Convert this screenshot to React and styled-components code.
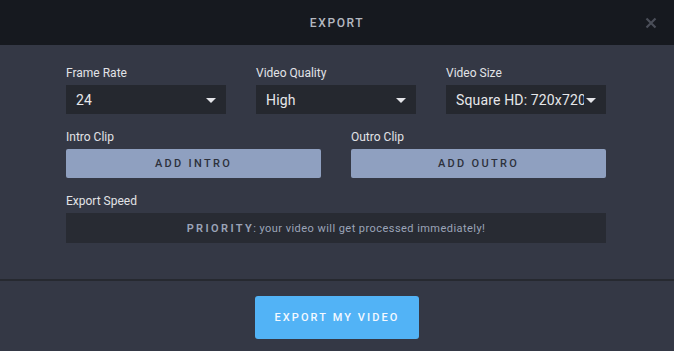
import styled, { createGlobalStyle } from 'styled-components';

const GlobalStyle = createGlobalStyle`
  * { box-sizing: border-box; }
  body {
    margin: 0;
    background: #343845;
    font-family: Roboto, "Liberation Sans", sans-serif;
  }
`

const Modal = styled.div`
  width: 674px;
  height: 351px;
  display: flex;
  flex-direction: column;
  background: #343845;
`

const Header = styled.div`
  position: relative;
  height: 45px;
  flex-shrink: 0;
  background: #16191f;
  display: flex;
  align-items: center;
  justify-content: center;
`

const Title = styled.h1`
  margin: 0;
  font-size: 12px;
  font-weight: 500;
  letter-spacing: 1.6px;
  color: #b4b8c0;
`

const Close = styled.button`
  position: absolute;
  right: 17px;
  top: 17px;
  width: 12px;
  height: 12px;
  padding: 0;
  border: 0;
  background: none;
  display: flex;
  cursor: pointer;
`

const Body = styled.div`
  padding: 20px 68px 36px 66px;
  display: flex;
  flex-direction: column;
  gap: 15px;
  border-bottom: 2px solid #262930;
`

const Row = styled.div`
  display: grid;
  grid-template-columns: repeat(${p => p.cols}, 1fr);
  column-gap: 30px;
`

const Field = styled.div`
  display: flex;
  flex-direction: column;
  gap: 4px;
  min-width: 0;
`

const Label = styled.label`
  font-size: 12px;
  line-height: 16px;
  font-weight: 400;
  color: #e2e3e7;
`

const Select = styled.div`
  height: 29px;
  background: #25282f;
  color: #e6e7ea;
  font-size: 14px;
  letter-spacing: 0.15px;
  padding: 0 10px 0 10px;
  display: flex;
  align-items: center;
  gap: 2px;
`

const Value = styled.span`
  flex: 1;
  min-width: 0;
  white-space: nowrap;
  overflow: hidden;
`

const Caret = styled.span`
  flex-shrink: 0;
  width: 0;
  height: 0;
  margin-top: 1px;
  border-left: 5px solid transparent;
  border-right: 5px solid transparent;
  border-top: 5px solid #e3e4e8;
`

const ClipButton = styled.button`
  height: 29px;
  border: 0;
  border-radius: 2px;
  background: #8fa0c0;
  color: #2d313c;
  font-family: inherit;
  font-size: 11px;
  font-weight: 500;
  letter-spacing: 2.3px;
  cursor: pointer;
`

const SpeedBox = styled.div`
  height: 30px;
  background: #282b33;
  color: #9ba4b8;
  font-size: 11px;
  letter-spacing: 0.45px;
  display: flex;
  align-items: center;
  justify-content: center;
`

const Strong = styled.span`
  font-weight: 600;
  letter-spacing: 2.4px;
  margin-right: -1px;
`

const Footer = styled.div`
  flex: 1;
  display: flex;
  align-items: center;
  justify-content: center;
  padding-top: 3px;
`

const ExportButton = styled.button`
  width: 164px;
  height: 43px;
  border: 0;
  border-radius: 3px;
  background: #52b3f6;
  color: #f4f9ff;
  font-family: inherit;
  font-size: 11px;
  font-weight: 500;
  letter-spacing: 2.1px;
  cursor: pointer;
`

const selects = [
  { label: 'Frame Rate', value: '24' },
  { label: 'Video Quality', value: 'High' },
  { label: 'Video Size', value: 'Square HD: 720x720' },
]

const App = () => {
  return (
    <Modal>
      <GlobalStyle />
      <Header>
        <Title>EXPORT</Title>
        <Close aria-label="close">
          <svg width="12" height="12" viewBox="0 0 12 12">
            <path d="M1.5 1.5 L10.5 10.5 M10.5 1.5 L1.5 10.5" stroke="#4a4e58" strokeWidth="2.2" />
          </svg>
        </Close>
      </Header>
      <Body>
        <Row cols={3}>
          {selects.map(s => (
            <Field key={s.label}>
              <Label>{s.label}</Label>
              <Select>
                <Value>{s.value}</Value>
                <Caret />
              </Select>
            </Field>
          ))}
        </Row>
        <Row cols={2}>
          <Field>
            <Label>Intro Clip</Label>
            <ClipButton>ADD INTRO</ClipButton>
          </Field>
          <Field>
            <Label>Outro Clip</Label>
            <ClipButton>ADD OUTRO</ClipButton>
          </Field>
        </Row>
        <Field>
          <Label>Export Speed</Label>
          <SpeedBox>
            <Strong>PRIORITY</Strong>: your video will get processed immediately!
          </SpeedBox>
        </Field>
      </Body>
      <Footer>
        <ExportButton>EXPORT MY VIDEO</ExportButton>
      </Footer>
    </Modal>
  )
}

export default App
